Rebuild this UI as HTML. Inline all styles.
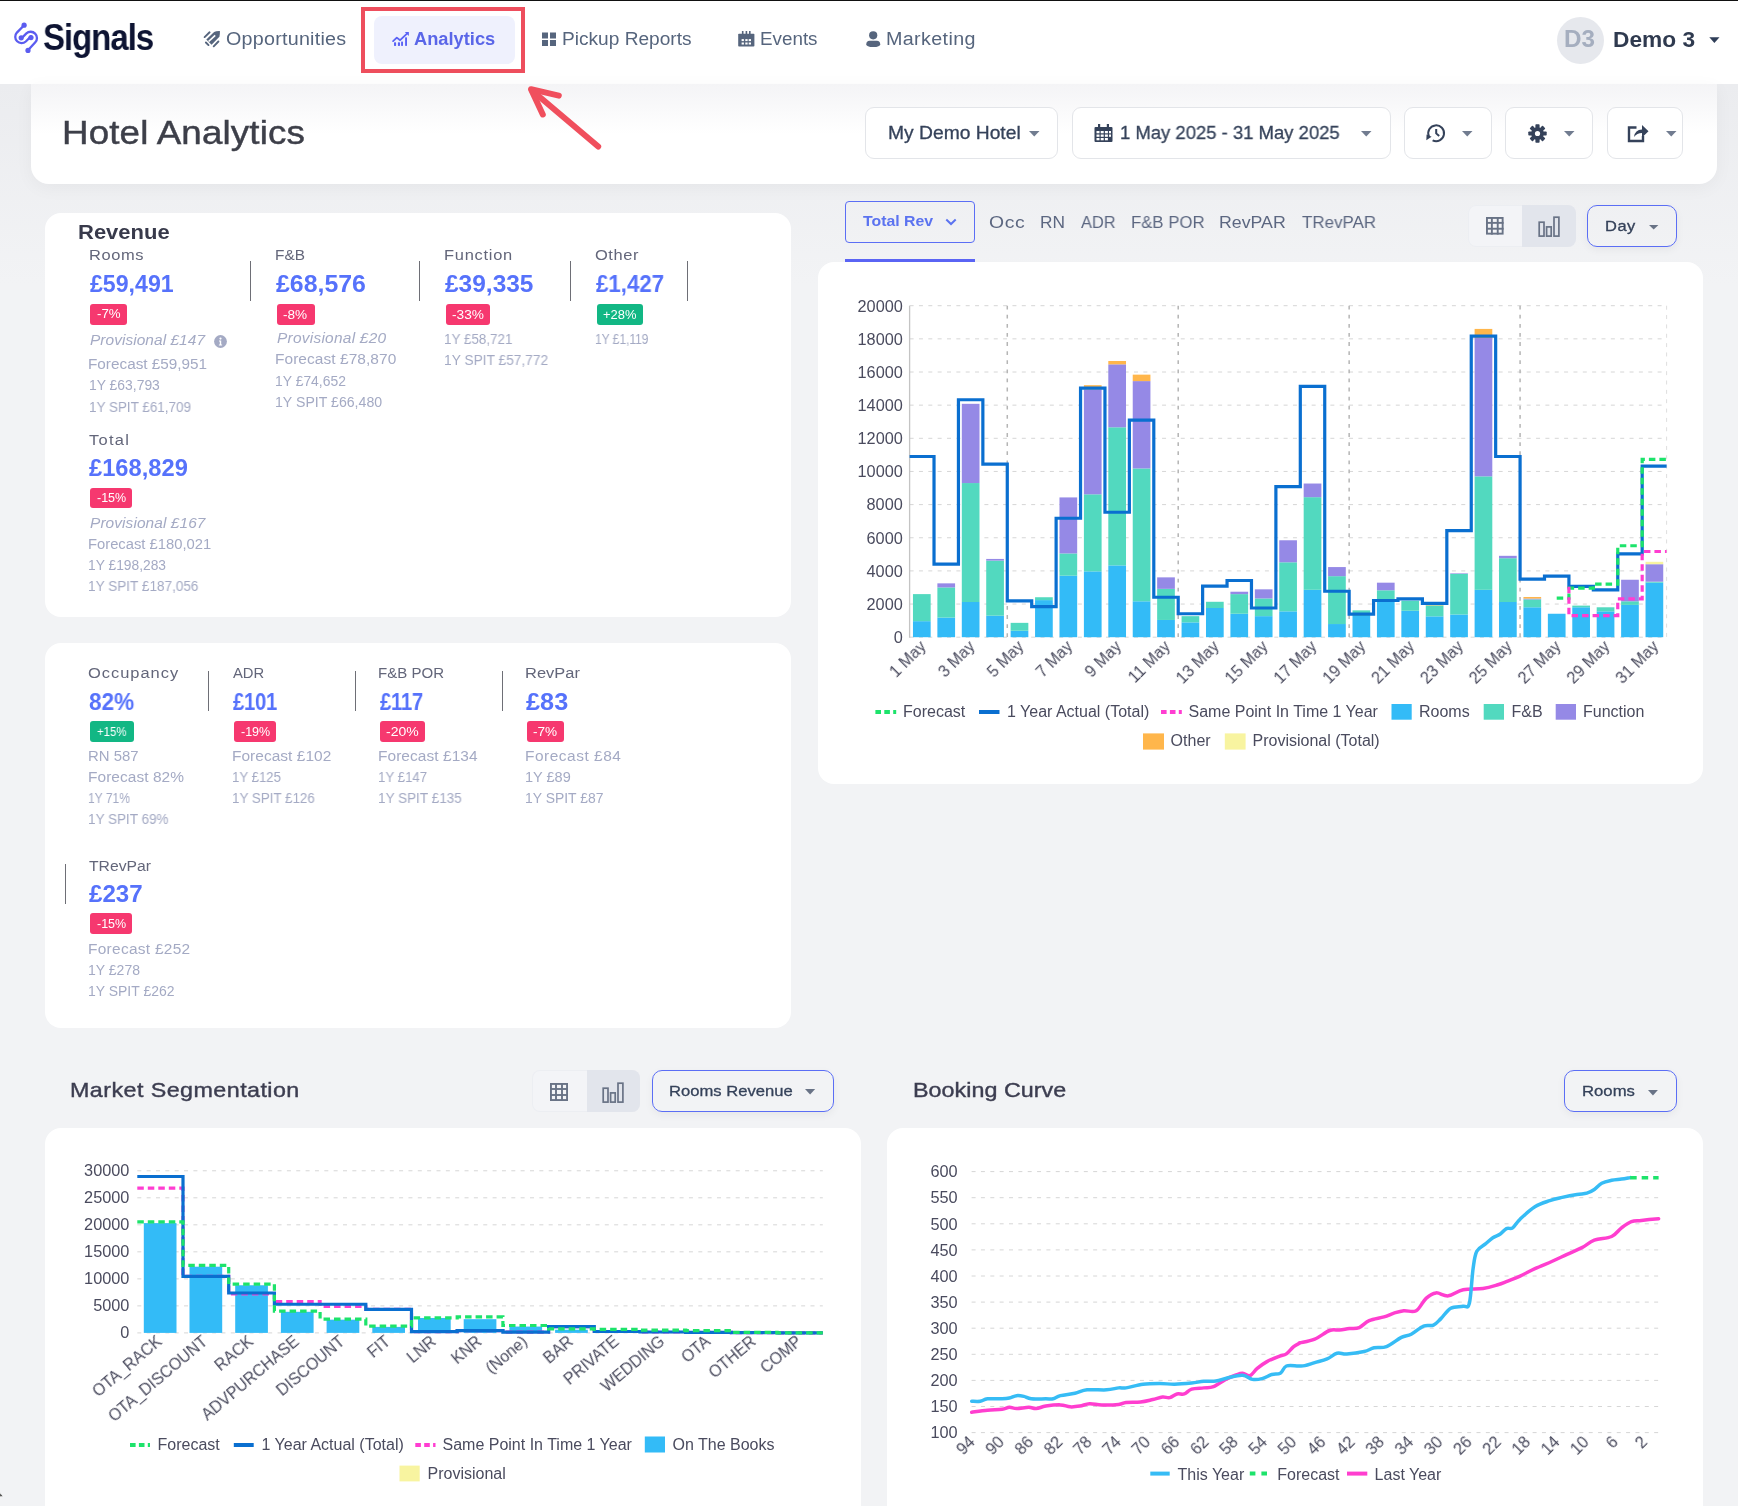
<!DOCTYPE html><html><head><meta charset="utf-8"><style>
html,body{margin:0;padding:0}
body{width:1738px;height:1506px;overflow:hidden;position:relative;background:#f2f3f5;font-family:'Liberation Sans', sans-serif}
.t{position:absolute;line-height:1;white-space:nowrap;will-change:transform}
svg text{will-change:transform}
svg{position:absolute;overflow:visible}
</style></head><body>
<div style="position:absolute;left:0px;top:84px;width:1738px;height:200px;background:linear-gradient(#ebecef,#f2f3f5);"></div>
<div style="position:absolute;left:0px;top:0px;width:1738px;height:84px;background:#fff;"></div>
<div style="position:absolute;left:0px;top:0px;width:1738px;height:1px;background:#111;"></div>
<svg style="left:0;top:0" width="60" height="60" viewBox="0 0 60 60">
<g fill="none" stroke="#5b5cf0" stroke-width="2.3" stroke-linecap="round">
<path d="M24.1 25.2 L16.9 32.6 A6.3 6.3 0 0 0 25.8 41.5 L31 36.4"/>
<path d="M21.2 38.6 L26.4 33.4 A6.3 6.3 0 0 1 35.3 42.3 L28 50.3"/>
</g>
<g fill="#5b5cf0"><circle cx="24.1" cy="25.2" r="2.6"/><circle cx="21.2" cy="37.8" r="2.6"/><circle cx="31" cy="37.6" r="2.6"/><circle cx="28" cy="50.4" r="2.6"/></g>
</svg>
<div class="t" style="left:43.12px;top:19.45px;font-size:37.5px;color:#0e1433;transform:scaleX(0.8800);transform-origin:0 0;font-weight:700;letter-spacing:-1.189px;">Signals</div>
<svg style="left:195px;top:22px" width="40" height="34" viewBox="0 0 40 34">
<path d="M11.3 17.5 L19.1 9.9 Q21 9 24.9 9.1 Q25 12.5 24.4 14.7 L16.6 22.8 Z" fill="#56657d"/>
<path d="M13.6 19.5 L20.2 13.4" stroke="#fff" stroke-width="1.7"/>
<g stroke="#56657d" stroke-width="1.9" stroke-linecap="round" fill="none">
<path d="M9.6 15.1 L14.6 10.3"/><path d="M10.9 20.5 L13.5 23.1"/><path d="M18.7 24.3 L23.4 19.5"/></g>
</svg>
<div class="t" style="left:225.88px;top:30.70px;font-size:17.6px;color:#56657d;transform:scaleX(1.1200);transform-origin:0 0;letter-spacing:0.219px;">Opportunities</div>
<div style="position:absolute;left:374px;top:16px;width:141px;height:48px;background:#eff1fd;border-radius:8px;"></div>
<div style="position:absolute;left:361px;top:7px;width:164px;height:66px;box-sizing:border-box;border:4.5px solid #ee4e5d;"></div>
<svg style="left:385px;top:25px" width="30" height="27" viewBox="0 0 30 27">
<g fill="#5a63f5"><rect x="9" y="17.3" width="2.1" height="3.6" rx="0.6"/><rect x="12.9" y="17.3" width="2.1" height="3.6" rx="0.6"/><rect x="16.1" y="16.5" width="1.9" height="4.4" rx="0.6"/><rect x="20.1" y="12.3" width="1.9" height="8.6" rx="0.6"/>
<path d="M19.8 6.9 L23.9 6.9 L23.9 11 Z"/></g>
<path d="M8.1 16.1 L11.8 12.6 L15.1 15.2 L22 8.6" stroke="#5a63f5" stroke-width="1.8" fill="none" stroke-linecap="round" stroke-linejoin="round"/>
</svg>
<div class="t" style="left:414.26px;top:30.90px;font-size:17.6px;color:#5a66e8;transform:scaleX(1.0390);transform-origin:0 0;font-weight:700;">Analytics</div>
<svg style="left:542px;top:32px" width="15" height="15" viewBox="0 0 15 15"><g fill="#56657d">
<rect x="0" y="0.5" width="6" height="6"/><rect x="8" y="0.5" width="6" height="6"/><rect x="0" y="8" width="6" height="6"/><rect x="8" y="8" width="6" height="6"/></g></svg>
<div class="t" style="left:561.71px;top:30.70px;font-size:17.6px;color:#56657d;transform:scaleX(1.0856);transform-origin:0 0;">Pickup Reports</div>
<svg style="left:738px;top:31px" width="17" height="16" viewBox="0 0 17 16">
<rect x="0.2" y="2.8" width="16.2" height="12.8" rx="0.8" fill="#56657d"/>
<g fill="#56657d"><rect x="3.9" y="0" width="1.6" height="3.4"/><rect x="7.6" y="0" width="1.6" height="3.4"/><rect x="11" y="0" width="1.6" height="3.4"/></g>
<g fill="#fff"><rect x="3.6" y="8.1" width="2.3" height="2"/><rect x="7.3" y="8.1" width="2.3" height="2"/><rect x="10.7" y="8.1" width="2.3" height="2"/>
<rect x="3.6" y="11.5" width="2.3" height="2"/><rect x="7.3" y="11.5" width="2.3" height="2"/><rect x="10.7" y="11.5" width="2.3" height="2"/></g>
</svg>
<div class="t" style="left:760.23px;top:30.70px;font-size:17.6px;color:#56657d;transform:scaleX(1.0692);transform-origin:0 0;">Events</div>
<svg style="left:865.5px;top:30.5px" width="15" height="17" viewBox="0 0 15 17"><g fill="#56657d">
<circle cx="7.2" cy="4.3" r="4.1"/><path d="M0.3 13.3 Q0.3 9.9 3.6 9.7 L10.9 9.7 Q14.2 9.9 14.2 13.3 Q14.2 16.1 7.25 16.1 Q0.3 16.1 0.3 13.3 Z"/></g></svg>
<div class="t" style="left:886.48px;top:30.70px;font-size:17.6px;color:#56657d;transform:scaleX(1.1200);transform-origin:0 0;letter-spacing:0.335px;">Marketing</div>
<div style="position:absolute;left:1557px;top:16.5px;width:47px;height:47px;border-radius:50%;background:#e6e8ed"></div>
<div class="t" style="left:1564.45px;top:28.33px;font-size:23px;color:#a5aebf;transform:scaleX(1.0536);transform-origin:0 0;font-weight:700;">D3</div>
<div class="t" style="left:1612.97px;top:28.97px;font-size:22px;color:#2f3a4f;transform:scaleX(1.0321);transform-origin:0 0;font-weight:700;">Demo 3</div>
<svg style="left:1708.5px;top:37px" width="11" height="7" viewBox="0 0 11 7"><path d="M0.3 0.3 L10.5 0.3 L5.4 6 Z" fill="#2f3e58"/></svg>
<div style="position:absolute;left:31px;top:84px;width:1686px;height:100px;background:#fff;border-radius:0 0 18px 18px;box-shadow:0 4px 18px rgba(0,0,0,0.045)"></div>
<div style="position:absolute;left:31px;top:84px;width:1686px;height:50px;background:linear-gradient(#f4f4f6,rgba(255,255,255,0))"></div>
<div class="t" style="left:62.24px;top:116.63px;font-size:32.8px;color:#3d3f49;transform:scaleX(1.1200);transform-origin:0 0;letter-spacing:0.120px;-webkit-text-stroke:0.45px #3d3f49;">Hotel Analytics</div>
<div style="position:absolute;left:865px;top:107px;width:193px;height:52px;box-sizing:border-box;border:1px solid #e3e5e9;border-radius:9px;background:#fff"></div>
<div class="t" style="left:887.96px;top:124.05px;font-size:18.6px;color:#35425a;transform:scaleX(1.0357);transform-origin:0 0;-webkit-text-stroke:0.3px #35425a;">My Demo Hotel</div>
<svg style="left:1029px;top:130.8px" width="10.5" height="5.5" viewBox="0 0 10.5 5.5"><path d="M0 0 L10.5 0 L5.25 5.5 Z" fill="#717c90"/></svg>
<div style="position:absolute;left:1072px;top:107px;width:319px;height:52px;box-sizing:border-box;border:1px solid #e3e5e9;border-radius:9px;background:#fff"></div>
<svg style="left:1094px;top:124px" width="19" height="18" viewBox="0 0 19 18"><g fill="#35425a"><rect x="0.5" y="3" width="18" height="15" rx="1"/></g>
<g fill="#fff"><rect x="2.5" y="7" width="3" height="2.3"/><rect x="6.7" y="7" width="3" height="2.3"/><rect x="10.9" y="7" width="3" height="2.3"/><rect x="15" y="7" width="2" height="2.3"/>
<rect x="2.5" y="10.5" width="3" height="2.3"/><rect x="6.7" y="10.5" width="3" height="2.3"/><rect x="10.9" y="10.5" width="3" height="2.3"/><rect x="15" y="10.5" width="2" height="2.3"/>
<rect x="2.5" y="14" width="3" height="2.3"/><rect x="6.7" y="14" width="3" height="2.3"/><rect x="10.9" y="14" width="3" height="2.3"/></g>
<g fill="#35425a"><rect x="4" y="0" width="2.2" height="4.5"/><rect x="12.8" y="0" width="2.2" height="4.5"/></g></svg>
<div class="t" style="left:1119.51px;top:124.05px;font-size:18.6px;color:#35425a;transform:scaleX(0.9932);transform-origin:0 0;-webkit-text-stroke:0.3px #35425a;">1 May 2025 - 31 May 2025</div>
<svg style="left:1361px;top:130.8px" width="10.5" height="5.5" viewBox="0 0 10.5 5.5"><path d="M0 0 L10.5 0 L5.25 5.5 Z" fill="#717c90"/></svg>
<div style="position:absolute;left:1404px;top:107px;width:88px;height:52px;box-sizing:border-box;border:1px solid #e3e5e9;border-radius:9px;background:#fff"></div>
<svg style="left:1425px;top:123px" width="22" height="20" viewBox="0 0 22 20"><g fill="none" stroke="#35425a" stroke-width="2">
<path d="M3.9 13.4 A7.9 7.9 0 1 1 7.6 17.3"/><path d="M11.2 6 L11.2 10.4 L14.2 13"/></g>
<path d="M1.3 17.2 L1.6 11.4 L6.6 13.8 Z" fill="#35425a"/></svg>
<svg style="left:1462px;top:130.8px" width="10.5" height="5.5" viewBox="0 0 10.5 5.5"><path d="M0 0 L10.5 0 L5.25 5.5 Z" fill="#717c90"/></svg>
<div style="position:absolute;left:1505px;top:107px;width:88px;height:52px;box-sizing:border-box;border:1px solid #e3e5e9;border-radius:9px;background:#fff"></div>
<svg style="left:1528px;top:124px" width="19" height="19" viewBox="0 0 19 19"><g transform="translate(9.5 9.5)" fill="#35425a">
<circle r="6.3"/><rect x="-2.1" y="-9.2" width="4.2" height="4.5" rx="0.8" transform="rotate(0)"/><rect x="-2.1" y="-9.2" width="4.2" height="4.5" rx="0.8" transform="rotate(45)"/><rect x="-2.1" y="-9.2" width="4.2" height="4.5" rx="0.8" transform="rotate(90)"/><rect x="-2.1" y="-9.2" width="4.2" height="4.5" rx="0.8" transform="rotate(135)"/><rect x="-2.1" y="-9.2" width="4.2" height="4.5" rx="0.8" transform="rotate(180)"/><rect x="-2.1" y="-9.2" width="4.2" height="4.5" rx="0.8" transform="rotate(225)"/><rect x="-2.1" y="-9.2" width="4.2" height="4.5" rx="0.8" transform="rotate(270)"/><rect x="-2.1" y="-9.2" width="4.2" height="4.5" rx="0.8" transform="rotate(315)"/></g>
<circle cx="9.5" cy="9.5" r="2.6" fill="#fff"/></svg>
<svg style="left:1564px;top:130.8px" width="10.5" height="5.5" viewBox="0 0 10.5 5.5"><path d="M0 0 L10.5 0 L5.25 5.5 Z" fill="#717c90"/></svg>
<div style="position:absolute;left:1607px;top:107px;width:76px;height:52px;box-sizing:border-box;border:1px solid #e3e5e9;border-radius:9px;background:#fff"></div>
<svg style="left:1627px;top:123px" width="23" height="20" viewBox="0 0 23 20">
<path d="M9.5 4.5 L2 4.5 L2 18 L16 18 L16 13" fill="none" stroke="#35425a" stroke-width="2.4"/>
<path d="M7 14 Q8 6.5 15 6.5 L15 2 L21.5 8.3 L15 14.5 L15 10 Q10 10 7 14 Z" fill="#35425a"/></svg>
<svg style="left:1665.5px;top:130.8px" width="10.5" height="5.5" viewBox="0 0 10.5 5.5"><path d="M0 0 L10.5 0 L5.25 5.5 Z" fill="#717c90"/></svg>
<svg style="left:500px;top:70px" width="120" height="100" viewBox="500 70 120 100">
<g stroke="#f04f5d" stroke-width="6" stroke-linecap="round" stroke-linejoin="round" fill="none">
<path d="M598.2 146.5 L532 90.5"/><path d="M558.8 95.6 L531 89.2 L542.8 114.5"/></g>
</svg>
<div style="position:absolute;left:45px;top:213px;width:746px;height:404px;background:#fff;border-radius:16px;"></div>
<div class="t" style="left:77.93px;top:221.74px;font-size:20.5px;color:#383a4b;transform:scaleX(1.0726);transform-origin:0 0;font-weight:700;">Revenue</div>
<div class="t" style="left:88.58px;top:248.35px;font-size:14.7px;color:#63667a;transform:scaleX(1.1200);transform-origin:0 0;letter-spacing:0.513px;">Rooms</div>
<div class="t" style="left:89.70px;top:273.43px;font-size:23px;color:#5672fb;transform:scaleX(1.0060);transform-origin:0 0;font-weight:700;">£59,491</div>
<div style="position:absolute;left:90px;top:304px;width:37.0px;height:20.8px;background:#f6386f;border-radius:3px"></div>
<div class="t" style="left:96.74px;top:308.42px;font-size:12.5px;color:#fff;transform:scaleX(1.0619);transform-origin:0 0;">-7%</div>
<div class="t" style="left:90.00px;top:334.02px;font-size:13.8px;color:#a4aac4;transform:scaleX(1.1200);transform-origin:0 0;letter-spacing:0.045px;font-style:italic;">Provisional £147</div>
<svg style="left:214px;top:334.5px" width="13" height="13" viewBox="0 0 13 13"><circle cx="6.5" cy="6.5" r="6.4" fill="#a4aac4"/><circle cx="6.5" cy="3.6" r="1.1" fill="#fff"/><path d="M5 5.6 L7.2 5.6 L7.2 9.6 L8.1 9.6 L8.1 10.6 L4.9 10.6 L4.9 9.6 L5.8 9.6 L5.8 6.6 L5 6.6 Z" fill="#fff"/></svg>
<div class="t" style="left:88.39px;top:358.22px;font-size:13.8px;color:#a4aac4;transform:scaleX(1.1094);transform-origin:0 0;">Forecast £59,951</div>
<div class="t" style="left:88.69px;top:379.32px;font-size:13.8px;color:#a4aac4;transform:scaleX(1.0072);transform-origin:0 0;">1Y £63,793</div>
<div class="t" style="left:88.73px;top:401.32px;font-size:13.8px;color:#a4aac4;transform:scaleX(0.9748);transform-origin:0 0;">1Y SPIT £61,709</div>
<div style="position:absolute;left:249.9px;top:261.3px;width:1.3px;height:39.39999999999998px;background:#6e6f76"></div>
<div class="t" style="left:274.85px;top:248.45px;font-size:14.7px;color:#63667a;transform:scaleX(1.0481);transform-origin:0 0;">F&amp;B</div>
<div class="t" style="left:276.20px;top:273.13px;font-size:23px;color:#5672fb;transform:scaleX(1.0817);transform-origin:0 0;font-weight:700;">£68,576</div>
<div style="position:absolute;left:277px;top:304.2px;width:38.0px;height:20.8px;background:#f6386f;border-radius:3px"></div>
<div class="t" style="left:283.41px;top:308.62px;font-size:12.5px;color:#fff;transform:scaleX(1.0857);transform-origin:0 0;">-8%</div>
<div class="t" style="left:276.50px;top:332.32px;font-size:13.8px;color:#a4aac4;transform:scaleX(1.1200);transform-origin:0 0;letter-spacing:0.223px;font-style:italic;">Provisional £20</div>
<div class="t" style="left:274.78px;top:353.22px;font-size:13.8px;color:#a4aac4;transform:scaleX(1.1200);transform-origin:0 0;letter-spacing:0.058px;">Forecast £78,870</div>
<div class="t" style="left:275.49px;top:375.12px;font-size:13.8px;color:#a4aac4;transform:scaleX(1.0087);transform-origin:0 0;">1Y £74,652</div>
<div class="t" style="left:275.48px;top:396.22px;font-size:13.8px;color:#a4aac4;transform:scaleX(1.0243);transform-origin:0 0;">1Y SPIT £66,480</div>
<div style="position:absolute;left:418.9px;top:261.3px;width:1.3px;height:39.39999999999998px;background:#6e6f76"></div>
<div class="t" style="left:443.58px;top:248.45px;font-size:14.7px;color:#63667a;transform:scaleX(1.1200);transform-origin:0 0;letter-spacing:0.651px;">Function</div>
<div class="t" style="left:444.70px;top:273.13px;font-size:23px;color:#5672fb;transform:scaleX(1.0639);transform-origin:0 0;font-weight:700;">£39,335</div>
<div style="position:absolute;left:446px;top:304.2px;width:44.0px;height:20.8px;background:#f6386f;border-radius:3px"></div>
<div class="t" style="left:451.71px;top:308.62px;font-size:12.5px;color:#fff;transform:scaleX(1.0929);transform-origin:0 0;">-33%</div>
<div class="t" style="left:443.73px;top:332.92px;font-size:13.8px;color:#a4aac4;transform:scaleX(0.9725);transform-origin:0 0;">1Y £58,721</div>
<div class="t" style="left:443.70px;top:353.72px;font-size:13.8px;color:#a4aac4;transform:scaleX(0.9951);transform-origin:0 0;">1Y SPIT £57,772</div>
<div style="position:absolute;left:569.8px;top:261.3px;width:1.3px;height:39.39999999999998px;background:#6e6f76"></div>
<div class="t" style="left:594.88px;top:248.45px;font-size:14.7px;color:#63667a;transform:scaleX(1.1200);transform-origin:0 0;letter-spacing:0.509px;">Other</div>
<div class="t" style="left:596.00px;top:273.13px;font-size:23px;color:#5672fb;transform:scaleX(0.9686);transform-origin:0 0;font-weight:700;">£1,427</div>
<div style="position:absolute;left:597px;top:304.2px;width:46.0px;height:20.8px;background:#12b784;border-radius:3px"></div>
<div class="t" style="left:603.26px;top:308.62px;font-size:12.5px;color:#fff;transform:scaleX(1.0355);transform-origin:0 0;">+28%</div>
<div class="t" style="left:595.12px;top:332.92px;font-size:13.8px;color:#a4aac4;transform:scaleX(0.8800);transform-origin:0 0;letter-spacing:-0.114px;">1Y £1,119</div>
<div style="position:absolute;left:686.8px;top:261.3px;width:1.3px;height:39.39999999999998px;background:#6e6f76"></div>
<div class="t" style="left:89.20px;top:433.35px;font-size:14.7px;color:#63667a;transform:scaleX(1.1200);transform-origin:0 0;letter-spacing:1.138px;">Total</div>
<div class="t" style="left:89.20px;top:457.03px;font-size:23px;color:#5672fb;transform:scaleX(1.0305);transform-origin:0 0;font-weight:700;">£168,829</div>
<div style="position:absolute;left:90px;top:487.5px;width:42.0px;height:20.8px;background:#f6386f;border-radius:3px"></div>
<div class="t" style="left:96.71px;top:491.92px;font-size:12.5px;color:#fff;transform:scaleX(0.9929);transform-origin:0 0;">-15%</div>
<div class="t" style="left:89.80px;top:517.22px;font-size:13.8px;color:#a4aac4;transform:scaleX(1.1200);transform-origin:0 0;letter-spacing:0.069px;font-style:italic;">Provisional £167</div>
<div class="t" style="left:88.13px;top:538.02px;font-size:13.8px;color:#a4aac4;transform:scaleX(1.0702);transform-origin:0 0;">Forecast £180,021</div>
<div class="t" style="left:88.21px;top:559.02px;font-size:13.8px;color:#a4aac4;transform:scaleX(0.9947);transform-origin:0 0;">1Y £198,283</div>
<div class="t" style="left:88.22px;top:580.02px;font-size:13.8px;color:#a4aac4;transform:scaleX(0.9838);transform-origin:0 0;">1Y SPIT £187,056</div>
<div style="position:absolute;left:45px;top:642.6px;width:746px;height:385px;background:#fff;border-radius:16px;"></div>
<div class="t" style="left:88.18px;top:666.25px;font-size:14.7px;color:#63667a;transform:scaleX(1.1200);transform-origin:0 0;letter-spacing:0.875px;">Occupancy</div>
<div class="t" style="left:88.92px;top:690.93px;font-size:23px;color:#5672fb;transform:scaleX(0.9822);transform-origin:0 0;font-weight:700;">82%</div>
<div style="position:absolute;left:89.9px;top:721.1px;width:44.0px;height:20.8px;background:#12b784;border-radius:3px"></div>
<div class="t" style="left:97.09px;top:725.52px;font-size:12.5px;color:#fff;transform:scaleX(0.9129);transform-origin:0 0;">+15%</div>
<div class="t" style="left:88.22px;top:749.52px;font-size:13.8px;color:#a4aac4;transform:scaleX(1.0800);transform-origin:0 0;">RN 587</div>
<div class="t" style="left:88.18px;top:771.22px;font-size:13.8px;color:#a4aac4;transform:scaleX(1.1200);transform-origin:0 0;letter-spacing:0.050px;">Forecast 82%</div>
<div class="t" style="left:88.42px;top:792.22px;font-size:13.8px;color:#a4aac4;transform:scaleX(0.8800);transform-origin:0 0;letter-spacing:-0.082px;">1Y 71%</div>
<div class="t" style="left:88.32px;top:813.02px;font-size:13.8px;color:#a4aac4;transform:scaleX(0.9778);transform-origin:0 0;">1Y SPIT 69%</div>
<div style="position:absolute;left:208.2px;top:671.3px;width:1.3px;height:39.700000000000045px;background:#6e6f76"></div>
<div class="t" style="left:233.00px;top:666.25px;font-size:14.7px;color:#63667a;transform:scaleX(1.0067);transform-origin:0 0;">ADR</div>
<div class="t" style="left:233.00px;top:690.93px;font-size:23px;color:#5672fb;transform:scaleX(0.8800);transform-origin:0 0;font-weight:700;letter-spacing:-0.333px;">£101</div>
<div style="position:absolute;left:234.2px;top:721.1px;width:41.8px;height:20.8px;background:#f6386f;border-radius:3px"></div>
<div class="t" style="left:240.51px;top:725.52px;font-size:12.5px;color:#fff;transform:scaleX(0.9929);transform-origin:0 0;">-19%</div>
<div class="t" style="left:231.88px;top:749.52px;font-size:13.8px;color:#a4aac4;transform:scaleX(1.1200);transform-origin:0 0;letter-spacing:0.034px;">Forecast £102</div>
<div class="t" style="left:232.04px;top:771.22px;font-size:13.8px;color:#a4aac4;transform:scaleX(0.9560);transform-origin:0 0;">1Y £125</div>
<div class="t" style="left:232.03px;top:792.22px;font-size:13.8px;color:#a4aac4;transform:scaleX(0.9690);transform-origin:0 0;">1Y SPIT £126</div>
<div style="position:absolute;left:354.9px;top:671.3px;width:1.3px;height:39.700000000000045px;background:#6e6f76"></div>
<div class="t" style="left:377.98px;top:666.25px;font-size:14.7px;color:#63667a;transform:scaleX(1.0238);transform-origin:0 0;">F&amp;B POR</div>
<div class="t" style="left:379.70px;top:690.93px;font-size:23px;color:#5672fb;transform:scaleX(0.8800);transform-origin:0 0;font-weight:700;letter-spacing:-0.311px;">£117</div>
<div style="position:absolute;left:380.3px;top:721.1px;width:44.7px;height:20.8px;background:#f6386f;border-radius:3px"></div>
<div class="t" style="left:386.18px;top:725.52px;font-size:12.5px;color:#fff;transform:scaleX(1.1200);transform-origin:0 0;letter-spacing:0.012px;">-20%</div>
<div class="t" style="left:377.88px;top:749.52px;font-size:13.8px;color:#a4aac4;transform:scaleX(1.1200);transform-origin:0 0;letter-spacing:0.057px;">Forecast £134</div>
<div class="t" style="left:378.04px;top:771.22px;font-size:13.8px;color:#a4aac4;transform:scaleX(0.9600);transform-origin:0 0;">1Y £147</div>
<div class="t" style="left:378.02px;top:792.22px;font-size:13.8px;color:#a4aac4;transform:scaleX(0.9798);transform-origin:0 0;">1Y SPIT £135</div>
<div style="position:absolute;left:501.9px;top:671.3px;width:1.3px;height:39.700000000000045px;background:#6e6f76"></div>
<div class="t" style="left:524.68px;top:666.25px;font-size:14.7px;color:#63667a;transform:scaleX(1.1200);transform-origin:0 0;letter-spacing:0.025px;">RevPar</div>
<div class="t" style="left:525.80px;top:690.93px;font-size:23px;color:#5672fb;transform:scaleX(1.1000);transform-origin:0 0;font-weight:700;">£83</div>
<div style="position:absolute;left:527px;top:721.1px;width:36.8px;height:20.8px;background:#f6386f;border-radius:3px"></div>
<div class="t" style="left:533.11px;top:725.52px;font-size:12.5px;color:#fff;transform:scaleX(1.0857);transform-origin:0 0;">-7%</div>
<div class="t" style="left:524.68px;top:749.52px;font-size:13.8px;color:#a4aac4;transform:scaleX(1.1200);transform-origin:0 0;letter-spacing:0.464px;">Forecast £84</div>
<div class="t" style="left:524.75px;top:771.22px;font-size:13.8px;color:#a4aac4;transform:scaleX(1.0524);transform-origin:0 0;">1Y £89</div>
<div class="t" style="left:524.79px;top:792.22px;font-size:13.8px;color:#a4aac4;transform:scaleX(1.0092);transform-origin:0 0;">1Y SPIT £87</div>
<div style="position:absolute;left:64.9px;top:863.8px;width:1.3px;height:39.90000000000009px;background:#6e6f76"></div>
<div class="t" style="left:89.20px;top:859.15px;font-size:14.7px;color:#63667a;transform:scaleX(1.0707);transform-origin:0 0;">TRevPar</div>
<div class="t" style="left:89.20px;top:882.53px;font-size:23px;color:#5672fb;transform:scaleX(1.0480);transform-origin:0 0;font-weight:700;">£237</div>
<div style="position:absolute;left:90px;top:913.3px;width:42.0px;height:20.8px;background:#f6386f;border-radius:3px"></div>
<div class="t" style="left:96.71px;top:917.72px;font-size:12.5px;color:#fff;transform:scaleX(0.9929);transform-origin:0 0;">-15%</div>
<div class="t" style="left:88.08px;top:942.82px;font-size:13.8px;color:#a4aac4;transform:scaleX(1.1200);transform-origin:0 0;letter-spacing:0.250px;">Forecast £252</div>
<div class="t" style="left:88.18px;top:963.82px;font-size:13.8px;color:#a4aac4;transform:scaleX(1.0160);transform-origin:0 0;">1Y £278</div>
<div class="t" style="left:88.19px;top:985.02px;font-size:13.8px;color:#a4aac4;transform:scaleX(1.0131);transform-origin:0 0;">1Y SPIT £262</div>
<div style="position:absolute;left:845px;top:201px;width:129.5px;height:41.6px;box-sizing:border-box;border:1.3px solid #5b6ef5;border-radius:4px"></div>
<div class="t" style="left:863.30px;top:213.30px;font-size:15px;color:#5b73f0;transform:scaleX(1.0561);transform-origin:0 0;font-weight:700;">Total Rev</div>
<svg style="left:945px;top:218px" width="12" height="8" viewBox="0 0 12 8"><path d="M1.3 1.5 L6 6 L10.7 1.5" fill="none" stroke="#5b73f0" stroke-width="2"/></svg>
<div style="position:absolute;left:845px;top:258.8px;width:130px;height:4px;background:#5a64f4;"></div>
<div class="t" style="left:989.38px;top:213.85px;font-size:17.3px;color:#5c6781;transform:scaleX(1.1200);transform-origin:0 0;letter-spacing:0.545px;">Occ</div>
<div class="t" style="left:1040.01px;top:213.65px;font-size:17.3px;color:#5c6781;transform:scaleX(0.9913);transform-origin:0 0;">RN</div>
<div class="t" style="left:1080.60px;top:213.65px;font-size:17.3px;color:#5c6781;transform:scaleX(0.9500);transform-origin:0 0;">ADR</div>
<div class="t" style="left:1130.73px;top:213.65px;font-size:17.3px;color:#5c6781;transform:scaleX(0.9689);transform-origin:0 0;">F&amp;B POR</div>
<div class="t" style="left:1218.77px;top:213.65px;font-size:17.3px;color:#5c6781;transform:scaleX(1.0270);transform-origin:0 0;">RevPAR</div>
<div class="t" style="left:1301.60px;top:213.65px;font-size:17.3px;color:#5c6781;transform:scaleX(0.9813);transform-origin:0 0;">TRevPAR</div>
<div style="position:absolute;left:1467.7px;top:204.8px;width:108px;height:42px;border-radius:8px;background:#f3f4f7;overflow:hidden;box-shadow:0 0 0 1px #eceef2 inset"><div style="position:absolute;left:54.3px;top:0;width:54px;height:42px;background:#e2e5ec"></div></div>
<svg style="left:1486px;top:217.4px" width="17.6" height="17.6" viewBox="0 0 17.6 17.6"><g fill="none" stroke="#697386" stroke-width="1.9"><rect x="0.95" y="0.95" width="15.700000000000001" height="15.700000000000001"/><path d="M5.87 0 V17.6"/><path d="M0 5.87 H17.6"/><path d="M11.73 0 V17.6"/><path d="M0 11.73 H17.6"/></g></svg>
<svg style="left:1537.5px;top:215.5px" width="22.0" height="21.0" viewBox="0 0 22 21"><g fill="none" stroke="#697386" stroke-width="1.7"><rect x="1.2" y="6.2" width="4.8" height="13.9"/><rect x="8.6" y="10.9" width="4.6" height="9.2"/><rect x="16" y="1.2" width="4.9" height="18.9"/></g></svg>
<div style="position:absolute;left:1587px;top:205px;width:89.5px;height:41.7px;box-sizing:border-box;border:1.5px solid #5b6ef5;border-radius:10px;box-shadow:0 3px 8px rgba(0,0,0,0.05)"></div>
<div class="t" style="left:1604.88px;top:218.65px;font-size:14.7px;color:#35425a;transform:scaleX(1.1200);transform-origin:0 0;letter-spacing:0.446px;-webkit-text-stroke:0.3px #35425a;">Day</div>
<svg style="left:1648.6px;top:225.3px" width="9.4" height="4.5" viewBox="0 0 9.4 4.5"><path d="M0 0 L9.4 0 L4.7 4.5 Z" fill="#697386"/></svg>
<div style="position:absolute;left:818px;top:262px;width:885px;height:521.5px;background:#fff;border-radius:16px;"></div>
<svg style="left:818px;top:262px" width="885" height="522" viewBox="818 262 885 522" font-family="Liberation Sans, sans-serif">
<path d="M909.6 637.20 H1666.6" stroke="#d6d6d6" stroke-width="1" stroke-dasharray="4 5.35"/>
<text x="902.8" y="643.00" text-anchor="end" font-size="16.3" fill="#4a4b5e">0</text>
<path d="M909.6 604.05 H1666.6" stroke="#d6d6d6" stroke-width="1" stroke-dasharray="4 5.35"/>
<text x="902.8" y="609.85" text-anchor="end" font-size="16.3" fill="#4a4b5e">2000</text>
<path d="M909.6 570.90 H1666.6" stroke="#d6d6d6" stroke-width="1" stroke-dasharray="4 5.35"/>
<text x="902.8" y="576.70" text-anchor="end" font-size="16.3" fill="#4a4b5e">4000</text>
<path d="M909.6 537.75 H1666.6" stroke="#d6d6d6" stroke-width="1" stroke-dasharray="4 5.35"/>
<text x="902.8" y="543.55" text-anchor="end" font-size="16.3" fill="#4a4b5e">6000</text>
<path d="M909.6 504.60 H1666.6" stroke="#d6d6d6" stroke-width="1" stroke-dasharray="4 5.35"/>
<text x="902.8" y="510.40" text-anchor="end" font-size="16.3" fill="#4a4b5e">8000</text>
<path d="M909.6 471.45 H1666.6" stroke="#d6d6d6" stroke-width="1" stroke-dasharray="4 5.35"/>
<text x="902.8" y="477.25" text-anchor="end" font-size="16.3" fill="#4a4b5e">10000</text>
<path d="M909.6 438.30 H1666.6" stroke="#d6d6d6" stroke-width="1" stroke-dasharray="4 5.35"/>
<text x="902.8" y="444.10" text-anchor="end" font-size="16.3" fill="#4a4b5e">12000</text>
<path d="M909.6 405.15 H1666.6" stroke="#d6d6d6" stroke-width="1" stroke-dasharray="4 5.35"/>
<text x="902.8" y="410.95" text-anchor="end" font-size="16.3" fill="#4a4b5e">14000</text>
<path d="M909.6 372.00 H1666.6" stroke="#d6d6d6" stroke-width="1" stroke-dasharray="4 5.35"/>
<text x="902.8" y="377.80" text-anchor="end" font-size="16.3" fill="#4a4b5e">16000</text>
<path d="M909.6 338.85 H1666.6" stroke="#d6d6d6" stroke-width="1" stroke-dasharray="4 5.35"/>
<text x="902.8" y="344.65" text-anchor="end" font-size="16.3" fill="#4a4b5e">18000</text>
<path d="M909.6 305.70 H1666.6" stroke="#d6d6d6" stroke-width="1" stroke-dasharray="4 5.35"/>
<text x="902.8" y="311.50" text-anchor="end" font-size="16.3" fill="#4a4b5e">20000</text>
<path d="M1007.28 305.70 V637.2" stroke="#b5b5b5" stroke-width="1.5" stroke-dasharray="3.8 5.3"/>
<path d="M1178.21 305.70 V637.2" stroke="#b5b5b5" stroke-width="1.5" stroke-dasharray="3.8 5.3"/>
<path d="M1349.15 305.70 V637.2" stroke="#b5b5b5" stroke-width="1.5" stroke-dasharray="3.8 5.3"/>
<path d="M1520.08 305.70 V637.2" stroke="#b5b5b5" stroke-width="1.5" stroke-dasharray="3.8 5.3"/>
<path d="M1666.6 305.70 V637.2" stroke="#dedede" stroke-width="1" stroke-dasharray="4 5.35"/>
<path d="M909.6 305.70 V637.7" stroke="#c4c4c4" stroke-width="1.3"/>
<rect x="912.96" y="621.17" width="17.7" height="16.03" fill="#33bbf7"/>
<rect x="912.96" y="594.11" width="17.7" height="27.07" fill="#52d9bf"/>
<rect x="937.38" y="617.58" width="17.7" height="19.62" fill="#33bbf7"/>
<rect x="937.38" y="587.41" width="17.7" height="30.17" fill="#52d9bf"/>
<rect x="937.38" y="583.35" width="17.7" height="4.06" fill="#9589e6"/>
<rect x="961.80" y="602.01" width="17.7" height="35.19" fill="#33bbf7"/>
<rect x="961.80" y="483.05" width="17.7" height="118.96" fill="#52d9bf"/>
<rect x="961.80" y="403.82" width="17.7" height="79.23" fill="#9589e6"/>
<rect x="986.22" y="615.65" width="17.7" height="21.55" fill="#33bbf7"/>
<rect x="986.22" y="560.61" width="17.7" height="55.05" fill="#52d9bf"/>
<rect x="986.22" y="558.93" width="17.7" height="1.67" fill="#9589e6"/>
<rect x="1010.64" y="630.74" width="17.7" height="6.46" fill="#33bbf7"/>
<rect x="1010.64" y="622.85" width="17.7" height="7.89" fill="#52d9bf"/>
<rect x="1035.06" y="600.11" width="17.7" height="37.09" fill="#33bbf7"/>
<rect x="1035.06" y="597.24" width="17.7" height="2.87" fill="#52d9bf"/>
<rect x="1059.48" y="575.69" width="17.7" height="61.51" fill="#33bbf7"/>
<rect x="1059.48" y="553.43" width="17.7" height="22.26" fill="#52d9bf"/>
<rect x="1059.48" y="497.42" width="17.7" height="56.01" fill="#9589e6"/>
<rect x="1083.90" y="571.38" width="17.7" height="65.82" fill="#33bbf7"/>
<rect x="1083.90" y="494.31" width="17.7" height="77.07" fill="#52d9bf"/>
<rect x="1083.90" y="389.47" width="17.7" height="104.84" fill="#9589e6"/>
<rect x="1083.90" y="385.16" width="17.7" height="4.31" fill="#ffb64b"/>
<rect x="1108.31" y="565.40" width="17.7" height="71.80" fill="#33bbf7"/>
<rect x="1108.31" y="427.29" width="17.7" height="138.10" fill="#52d9bf"/>
<rect x="1108.31" y="364.34" width="17.7" height="62.95" fill="#9589e6"/>
<rect x="1108.31" y="360.99" width="17.7" height="3.35" fill="#ffb64b"/>
<rect x="1132.73" y="601.30" width="17.7" height="35.90" fill="#33bbf7"/>
<rect x="1132.73" y="468.45" width="17.7" height="132.85" fill="#52d9bf"/>
<rect x="1132.73" y="381.10" width="17.7" height="87.35" fill="#9589e6"/>
<rect x="1132.73" y="374.64" width="17.7" height="6.46" fill="#ffb64b"/>
<rect x="1157.15" y="619.96" width="17.7" height="17.24" fill="#33bbf7"/>
<rect x="1157.15" y="588.85" width="17.7" height="31.11" fill="#52d9bf"/>
<rect x="1157.15" y="577.36" width="17.7" height="11.49" fill="#9589e6"/>
<rect x="1181.57" y="622.37" width="17.7" height="14.83" fill="#33bbf7"/>
<rect x="1181.57" y="616.15" width="17.7" height="6.22" fill="#52d9bf"/>
<rect x="1205.99" y="607.99" width="17.7" height="29.21" fill="#33bbf7"/>
<rect x="1205.99" y="601.78" width="17.7" height="6.22" fill="#52d9bf"/>
<rect x="1230.41" y="613.75" width="17.7" height="23.45" fill="#33bbf7"/>
<rect x="1230.41" y="594.12" width="17.7" height="19.62" fill="#52d9bf"/>
<rect x="1230.41" y="591.72" width="17.7" height="2.40" fill="#9589e6"/>
<rect x="1254.83" y="616.15" width="17.7" height="21.05" fill="#33bbf7"/>
<rect x="1254.83" y="598.43" width="17.7" height="17.72" fill="#52d9bf"/>
<rect x="1254.83" y="589.33" width="17.7" height="9.10" fill="#9589e6"/>
<rect x="1279.25" y="611.34" width="17.7" height="25.86" fill="#33bbf7"/>
<rect x="1279.25" y="562.28" width="17.7" height="49.06" fill="#52d9bf"/>
<rect x="1279.25" y="540.27" width="17.7" height="22.01" fill="#9589e6"/>
<rect x="1303.67" y="589.81" width="17.7" height="47.39" fill="#33bbf7"/>
<rect x="1303.67" y="497.17" width="17.7" height="92.64" fill="#52d9bf"/>
<rect x="1303.67" y="483.53" width="17.7" height="13.64" fill="#9589e6"/>
<rect x="1328.09" y="624.04" width="17.7" height="13.16" fill="#33bbf7"/>
<rect x="1328.09" y="576.17" width="17.7" height="47.87" fill="#52d9bf"/>
<rect x="1328.09" y="567.07" width="17.7" height="9.10" fill="#9589e6"/>
<rect x="1352.51" y="615.95" width="17.7" height="21.25" fill="#33bbf7"/>
<rect x="1352.51" y="610.35" width="17.7" height="5.60" fill="#52d9bf"/>
<rect x="1376.93" y="601.93" width="17.7" height="35.27" fill="#33bbf7"/>
<rect x="1376.93" y="590.29" width="17.7" height="11.64" fill="#52d9bf"/>
<rect x="1376.93" y="582.68" width="17.7" height="7.61" fill="#9589e6"/>
<rect x="1401.35" y="610.75" width="17.7" height="26.45" fill="#33bbf7"/>
<rect x="1401.35" y="600.74" width="17.7" height="10.01" fill="#52d9bf"/>
<rect x="1425.77" y="616.35" width="17.7" height="20.85" fill="#33bbf7"/>
<rect x="1425.77" y="605.38" width="17.7" height="10.97" fill="#52d9bf"/>
<rect x="1425.77" y="604.38" width="17.7" height="0.99" fill="#ffb64b"/>
<rect x="1450.19" y="614.51" width="17.7" height="22.69" fill="#33bbf7"/>
<rect x="1450.19" y="573.87" width="17.7" height="40.64" fill="#52d9bf"/>
<rect x="1450.19" y="573.30" width="17.7" height="0.56" fill="#9589e6"/>
<rect x="1474.60" y="589.81" width="17.7" height="47.39" fill="#33bbf7"/>
<rect x="1474.60" y="476.36" width="17.7" height="113.46" fill="#52d9bf"/>
<rect x="1474.60" y="338.02" width="17.7" height="138.33" fill="#9589e6"/>
<rect x="1474.60" y="328.91" width="17.7" height="9.12" fill="#ffb64b"/>
<rect x="1499.02" y="602.01" width="17.7" height="35.19" fill="#33bbf7"/>
<rect x="1499.02" y="558.22" width="17.7" height="43.79" fill="#52d9bf"/>
<rect x="1499.02" y="555.82" width="17.7" height="2.40" fill="#9589e6"/>
<rect x="1523.44" y="607.28" width="17.7" height="29.92" fill="#33bbf7"/>
<rect x="1523.44" y="599.38" width="17.7" height="7.91" fill="#52d9bf"/>
<rect x="1523.44" y="598.58" width="17.7" height="0.80" fill="#9589e6"/>
<rect x="1523.44" y="596.99" width="17.7" height="1.59" fill="#ffb64b"/>
<rect x="1547.86" y="613.75" width="17.7" height="23.45" fill="#33bbf7"/>
<rect x="1572.28" y="607.28" width="17.7" height="29.92" fill="#33bbf7"/>
<rect x="1572.28" y="605.61" width="17.7" height="1.67" fill="#52d9bf"/>
<rect x="1596.70" y="611.34" width="17.7" height="25.86" fill="#33bbf7"/>
<rect x="1596.70" y="607.28" width="17.7" height="4.06" fill="#52d9bf"/>
<rect x="1621.12" y="604.90" width="17.7" height="32.30" fill="#33bbf7"/>
<rect x="1621.12" y="601.30" width="17.7" height="3.60" fill="#52d9bf"/>
<rect x="1621.12" y="579.75" width="17.7" height="21.55" fill="#9589e6"/>
<rect x="1645.54" y="582.64" width="17.7" height="54.56" fill="#33bbf7"/>
<rect x="1645.54" y="581.67" width="17.7" height="0.96" fill="#52d9bf"/>
<rect x="1645.54" y="564.20" width="17.7" height="17.47" fill="#9589e6"/>
<rect x="1645.54" y="561.80" width="17.7" height="2.40" fill="#f8f4a0"/>
<path d="M909.60 456.48 H934.02 V564.20 H958.44 V399.76 H982.86 V464.16 H1007.28 V600.82 H1031.70 V606.57 H1056.12 V518.24 H1080.54 V388.08 H1104.95 V512.26 H1129.37 V420.12 H1153.79 V597.24 H1178.21 V613.75 H1202.63 V586.22 H1227.05 V580.48 H1251.47 V607.99 H1275.89 V486.70 H1300.31 V386.37 H1324.73 V591.24 H1349.15 V614.16 H1373.57 V600.49 H1397.99 V598.83 H1422.41 V603.39 H1446.83 V530.69 H1471.25 V336.10 H1495.66 V456.48 H1520.08 V579.04 H1544.50 V576.17 H1568.92 V586.46 H1593.34 V589.81 H1617.76 V553.91 H1642.18 V466.06 H1666.60" fill="none" stroke="#0a6fd0" stroke-width="3.2" stroke-linejoin="miter"/>
<path d="M1556.71 598.18 H1568.92 V588.14 H1593.34 V584.06 H1617.76 V545.77 H1642.18 V459.35 H1666.60" fill="none" stroke="#1de36b" stroke-width="3.2" stroke-dasharray="6.5 4"/>
<path d="M1568.92 586.81 V615.65 H1617.76 V598.91 H1642.18 V551.51 H1666.6" fill="none" stroke="#ff3dd1" stroke-width="3.2" stroke-dasharray="6.5 4"/>
<text transform="translate(927.01 647.50) rotate(-45)" text-anchor="end" font-size="16" fill="#4a4b5e">1 May</text>
<text transform="translate(975.85 647.50) rotate(-45)" text-anchor="end" font-size="16" fill="#4a4b5e">3 May</text>
<text transform="translate(1024.69 647.50) rotate(-45)" text-anchor="end" font-size="16" fill="#4a4b5e">5 May</text>
<text transform="translate(1073.53 647.50) rotate(-45)" text-anchor="end" font-size="16" fill="#4a4b5e">7 May</text>
<text transform="translate(1122.36 647.50) rotate(-45)" text-anchor="end" font-size="16" fill="#4a4b5e">9 May</text>
<text transform="translate(1171.20 647.50) rotate(-45)" text-anchor="end" font-size="16" fill="#4a4b5e">11 May</text>
<text transform="translate(1220.04 647.50) rotate(-45)" text-anchor="end" font-size="16" fill="#4a4b5e">13 May</text>
<text transform="translate(1268.88 647.50) rotate(-45)" text-anchor="end" font-size="16" fill="#4a4b5e">15 May</text>
<text transform="translate(1317.72 647.50) rotate(-45)" text-anchor="end" font-size="16" fill="#4a4b5e">17 May</text>
<text transform="translate(1366.56 647.50) rotate(-45)" text-anchor="end" font-size="16" fill="#4a4b5e">19 May</text>
<text transform="translate(1415.40 647.50) rotate(-45)" text-anchor="end" font-size="16" fill="#4a4b5e">21 May</text>
<text transform="translate(1464.24 647.50) rotate(-45)" text-anchor="end" font-size="16" fill="#4a4b5e">23 May</text>
<text transform="translate(1513.07 647.50) rotate(-45)" text-anchor="end" font-size="16" fill="#4a4b5e">25 May</text>
<text transform="translate(1561.91 647.50) rotate(-45)" text-anchor="end" font-size="16" fill="#4a4b5e">27 May</text>
<text transform="translate(1610.75 647.50) rotate(-45)" text-anchor="end" font-size="16" fill="#4a4b5e">29 May</text>
<text transform="translate(1659.59 647.50) rotate(-45)" text-anchor="end" font-size="16" fill="#4a4b5e">31 May</text>
<path d="M875.4 712 H896.2" stroke="#1de36b" stroke-width="4" stroke-dasharray="5.6 3.3"/>
<text x="903" y="716.7" font-size="16" fill="#4a4b5e">Forecast</text>
<path d="M979 712 H999.5" stroke="#0a6fd0" stroke-width="4"/>
<text x="1007" y="716.7" font-size="16" fill="#4a4b5e">1 Year Actual (Total)</text>
<path d="M1161 712 H1181.8" stroke="#ff3dd1" stroke-width="4" stroke-dasharray="5.6 3.3"/>
<text x="1188.5" y="716.7" font-size="16" fill="#4a4b5e">Same Point In Time 1 Year</text>
<rect x="1391.5" y="704" width="20.2" height="15.7" fill="#33bbf7"/>
<text x="1419" y="716.7" font-size="16" fill="#4a4b5e">Rooms</text>
<rect x="1483.7" y="704" width="20.3" height="15.7" fill="#52d9bf"/>
<text x="1511.5" y="716.7" font-size="16" fill="#4a4b5e">F&amp;B</text>
<rect x="1555.7" y="704" width="20.3" height="15.7" fill="#9589e6"/>
<text x="1583" y="716.7" font-size="16" fill="#4a4b5e">Function</text>
<rect x="1143" y="733.4" width="21.0" height="16.2" fill="#ffb64b"/>
<text x="1170.6" y="745.8" font-size="16" fill="#4a4b5e">Other</text>
<rect x="1224.8" y="733.4" width="20.8" height="16.2" fill="#f8f4a0"/>
<text x="1252.5" y="745.8" font-size="16" fill="#4a4b5e">Provisional (Total)</text>
</svg>
<div class="t" style="left:70.06px;top:1080.49px;font-size:20.8px;color:#3c3d50;transform:scaleX(1.1200);transform-origin:0 0;letter-spacing:0.393px;-webkit-text-stroke:0.4px #3c3d50;">Market Segmentation</div>
<div style="position:absolute;left:532.3px;top:1069.5px;width:107.7px;height:42.7px;border-radius:8px;background:#f3f4f7;overflow:hidden;box-shadow:0 0 0 1px #eceef2 inset"><div style="position:absolute;left:54.5px;top:0;width:54px;height:43px;background:#e2e5ec"></div></div>
<svg style="left:549.8px;top:1083.2px" width="18" height="18" viewBox="0 0 18 18"><g fill="none" stroke="#697386" stroke-width="1.9"><rect x="0.95" y="0.95" width="16.1" height="16.1"/><path d="M6.00 0 V18"/><path d="M0 6.00 H18"/><path d="M12.00 0 V18"/><path d="M0 12.00 H18"/></g></svg>
<svg style="left:601.5px;top:1081.5px" width="22.0" height="21.0" viewBox="0 0 22 21"><g fill="none" stroke="#697386" stroke-width="1.7"><rect x="1.2" y="6.2" width="4.8" height="13.9"/><rect x="8.6" y="10.9" width="4.6" height="9.2"/><rect x="16" y="1.2" width="4.9" height="18.9"/></g></svg>
<div style="position:absolute;left:652px;top:1069.9px;width:181.6px;height:41.7px;box-sizing:border-box;border:1.5px solid #5b6ef5;border-radius:10px;box-shadow:0 3px 8px rgba(0,0,0,0.05)"></div>
<div class="t" style="left:669.30px;top:1083.31px;font-size:15.1px;color:#35425a;transform:scaleX(1.1000);transform-origin:0 0;-webkit-text-stroke:0.3px #35425a;">Rooms Revenue</div>
<svg style="left:805.4px;top:1089.4px" width="10.2" height="5.5" viewBox="0 0 10.2 5.5"><path d="M0 0 L10.2 0 L5.1 5.5 Z" fill="#697386"/></svg>
<div class="t" style="left:912.76px;top:1080.09px;font-size:20.8px;color:#3c3d50;transform:scaleX(1.1200);transform-origin:0 0;letter-spacing:0.031px;-webkit-text-stroke:0.4px #3c3d50;">Booking Curve</div>
<div style="position:absolute;left:1564.3px;top:1070.1px;width:112.6px;height:41.5px;box-sizing:border-box;border:1.5px solid #5b6ef5;border-radius:10px;box-shadow:0 3px 8px rgba(0,0,0,0.05)"></div>
<div class="t" style="left:1582.49px;top:1083.11px;font-size:15.1px;color:#35425a;transform:scaleX(1.1065);transform-origin:0 0;-webkit-text-stroke:0.3px #35425a;">Rooms</div>
<svg style="left:1648.3px;top:1089.6px" width="9.9" height="5.5" viewBox="0 0 9.9 5.5"><path d="M0 0 L9.9 0 L4.95 5.5 Z" fill="#697386"/></svg>
<div style="position:absolute;left:45px;top:1128.4px;width:816px;height:420px;background:#fff;border-radius:16px;"></div>
<div style="position:absolute;left:887px;top:1128.4px;width:816px;height:420px;background:#fff;border-radius:16px;"></div>
<svg style="left:45px;top:1128px" width="816" height="378" viewBox="45 1128 816 378" font-family="Liberation Sans, sans-serif">
<path d="M137.3 1332.90 H822.8" stroke="#d6d6d6" stroke-width="1" stroke-dasharray="4 5.35"/>
<text x="129.4" y="1338.20" text-anchor="end" font-size="16.3" fill="#4a4b5e">0</text>
<path d="M137.3 1305.88 H822.8" stroke="#d6d6d6" stroke-width="1" stroke-dasharray="4 5.35"/>
<text x="129.4" y="1311.18" text-anchor="end" font-size="16.3" fill="#4a4b5e">5000</text>
<path d="M137.3 1278.86 H822.8" stroke="#d6d6d6" stroke-width="1" stroke-dasharray="4 5.35"/>
<text x="129.4" y="1284.16" text-anchor="end" font-size="16.3" fill="#4a4b5e">10000</text>
<path d="M137.3 1251.84 H822.8" stroke="#d6d6d6" stroke-width="1" stroke-dasharray="4 5.35"/>
<text x="129.4" y="1257.14" text-anchor="end" font-size="16.3" fill="#4a4b5e">15000</text>
<path d="M137.3 1224.82 H822.8" stroke="#d6d6d6" stroke-width="1" stroke-dasharray="4 5.35"/>
<text x="129.4" y="1230.12" text-anchor="end" font-size="16.3" fill="#4a4b5e">20000</text>
<path d="M137.3 1197.80 H822.8" stroke="#d6d6d6" stroke-width="1" stroke-dasharray="4 5.35"/>
<text x="129.4" y="1203.10" text-anchor="end" font-size="16.3" fill="#4a4b5e">25000</text>
<path d="M137.3 1170.78 H822.8" stroke="#d6d6d6" stroke-width="1" stroke-dasharray="4 5.35"/>
<text x="129.4" y="1176.08" text-anchor="end" font-size="16.3" fill="#4a4b5e">30000</text>
<rect x="143.80" y="1223.10" width="32.7" height="109.80" fill="#33bbf7"/>
<rect x="189.50" y="1266.70" width="32.7" height="66.20" fill="#33bbf7"/>
<rect x="235.20" y="1285.25" width="32.7" height="47.65" fill="#33bbf7"/>
<rect x="280.90" y="1311.80" width="32.7" height="21.10" fill="#33bbf7"/>
<rect x="326.60" y="1319.69" width="32.7" height="13.21" fill="#33bbf7"/>
<rect x="372.30" y="1326.90" width="32.7" height="6.00" fill="#33bbf7"/>
<rect x="418.00" y="1317.97" width="32.7" height="14.93" fill="#33bbf7"/>
<rect x="463.70" y="1319.17" width="32.7" height="13.73" fill="#33bbf7"/>
<rect x="509.40" y="1326.55" width="32.7" height="6.35" fill="#33bbf7"/>
<rect x="555.10" y="1329.72" width="32.7" height="3.18" fill="#33bbf7"/>
<path d="M137.3 1188.10 H183.00 V1276.40 H228.70 V1293.99 H274.40 V1301.68 H320.10 V1306.31 H365.80 V1309.40 H411.50 V1331.70 H457.20 V1330.67 H502.90 V1332.04 H548.60 V1326.54 H594.30 V1331.49 H640.00 V1332.02 H685.70 V1332.37 H731.40 V1332.72 H777.10 V1332.90 H822.8" fill="none" stroke="#ff3dd1" stroke-width="3.2" stroke-dasharray="6.5 4"/>
<path d="M137.3 1176.50 H183.00 V1276.40 H228.70 V1292.99 H274.40 V1304.25 H320.10 V1304.25 H365.80 V1309.40 H411.50 V1331.70 H457.20 V1330.67 H502.90 V1332.04 H548.60 V1326.54 H594.30 V1331.49 H640.00 V1332.02 H685.70 V1332.37 H731.40 V1332.72 H777.10 V1332.90 H822.8" fill="none" stroke="#0a6fd0" stroke-width="3.2"/>
<path d="M137.3 1221.90 H183.00 V1265.40 H228.70 V1284.04 H274.40 V1311.11 H320.10 V1319.17 H365.80 V1326.04 H411.50 V1317.97 H457.20 V1316.95 H502.90 V1325.52 H548.60 V1328.84 H594.30 V1329.37 H640.00 V1330.07 H685.70 V1330.60 H731.40 V1332.37 H777.10 V1332.90 H822.8" fill="none" stroke="#1de36b" stroke-width="3.2" stroke-dasharray="6.5 4"/>
<text transform="translate(162.95 1343.30) rotate(-40)" text-anchor="end" font-size="15.9" fill="#4a4b5e">OTA_RACK</text>
<text transform="translate(208.65 1343.30) rotate(-40)" text-anchor="end" font-size="15.9" fill="#4a4b5e">OTA_DISCOUNT</text>
<text transform="translate(254.35 1343.30) rotate(-40)" text-anchor="end" font-size="15.9" fill="#4a4b5e">RACK</text>
<text transform="translate(300.05 1343.30) rotate(-40)" text-anchor="end" font-size="15.9" fill="#4a4b5e">ADVPURCHASE</text>
<text transform="translate(345.75 1343.30) rotate(-40)" text-anchor="end" font-size="15.9" fill="#4a4b5e">DISCOUNT</text>
<text transform="translate(391.45 1343.30) rotate(-40)" text-anchor="end" font-size="15.9" fill="#4a4b5e">FIT</text>
<text transform="translate(437.15 1343.30) rotate(-40)" text-anchor="end" font-size="15.9" fill="#4a4b5e">LNR</text>
<text transform="translate(482.85 1343.30) rotate(-40)" text-anchor="end" font-size="15.9" fill="#4a4b5e">KNR</text>
<text transform="translate(528.55 1343.30) rotate(-40)" text-anchor="end" font-size="15.9" fill="#4a4b5e">(None)</text>
<text transform="translate(574.25 1343.30) rotate(-40)" text-anchor="end" font-size="15.9" fill="#4a4b5e">BAR</text>
<text transform="translate(619.95 1343.30) rotate(-40)" text-anchor="end" font-size="15.9" fill="#4a4b5e">PRIVATE</text>
<text transform="translate(665.65 1343.30) rotate(-40)" text-anchor="end" font-size="15.9" fill="#4a4b5e">WEDDING</text>
<text transform="translate(711.35 1343.30) rotate(-40)" text-anchor="end" font-size="15.9" fill="#4a4b5e">OTA</text>
<text transform="translate(757.05 1343.30) rotate(-40)" text-anchor="end" font-size="15.9" fill="#4a4b5e">OTHER</text>
<text transform="translate(802.75 1343.30) rotate(-40)" text-anchor="end" font-size="15.9" fill="#4a4b5e">COMP</text>
<path d="M130 1445 H150" stroke="#1de36b" stroke-width="4" stroke-dasharray="5.6 3.3"/>
<text x="157.5" y="1449.8" font-size="16" fill="#4a4b5e">Forecast</text>
<path d="M233.8 1445 H253.7" stroke="#0a6fd0" stroke-width="4"/>
<text x="261.5" y="1449.8" font-size="16" fill="#4a4b5e">1 Year Actual (Total)</text>
<path d="M415.3 1445 H435.5" stroke="#ff3dd1" stroke-width="4" stroke-dasharray="5.6 3.3"/>
<text x="442.5" y="1449.8" font-size="16" fill="#4a4b5e">Same Point In Time 1 Year</text>
<rect x="644.8" y="1436.5" width="20.2" height="16.0" fill="#33bbf7"/>
<text x="672.5" y="1449.8" font-size="16" fill="#4a4b5e">On The Books</text>
<rect x="399.5" y="1465.6" width="20.2" height="15.8" fill="#f8f4a0"/>
<text x="427.5" y="1479.2" font-size="16" fill="#4a4b5e">Provisional</text>
</svg>
<svg style="left:887px;top:1128px" width="816" height="378" viewBox="887 1128 816 378" font-family="Liberation Sans, sans-serif">
<path d="M971.6 1432.60 H1658.6" stroke="#d6d6d6" stroke-width="1" stroke-dasharray="4 5.35"/>
<text x="957.6" y="1438.30" text-anchor="end" font-size="16.3" fill="#4a4b5e">100</text>
<path d="M971.6 1406.50 H1658.6" stroke="#d6d6d6" stroke-width="1" stroke-dasharray="4 5.35"/>
<text x="957.6" y="1412.20" text-anchor="end" font-size="16.3" fill="#4a4b5e">150</text>
<path d="M971.6 1380.40 H1658.6" stroke="#d6d6d6" stroke-width="1" stroke-dasharray="4 5.35"/>
<text x="957.6" y="1386.10" text-anchor="end" font-size="16.3" fill="#4a4b5e">200</text>
<path d="M971.6 1354.30 H1658.6" stroke="#d6d6d6" stroke-width="1" stroke-dasharray="4 5.35"/>
<text x="957.6" y="1360.00" text-anchor="end" font-size="16.3" fill="#4a4b5e">250</text>
<path d="M971.6 1328.20 H1658.6" stroke="#d6d6d6" stroke-width="1" stroke-dasharray="4 5.35"/>
<text x="957.6" y="1333.90" text-anchor="end" font-size="16.3" fill="#4a4b5e">300</text>
<path d="M971.6 1302.10 H1658.6" stroke="#d6d6d6" stroke-width="1" stroke-dasharray="4 5.35"/>
<text x="957.6" y="1307.80" text-anchor="end" font-size="16.3" fill="#4a4b5e">350</text>
<path d="M971.6 1276.00 H1658.6" stroke="#d6d6d6" stroke-width="1" stroke-dasharray="4 5.35"/>
<text x="957.6" y="1281.70" text-anchor="end" font-size="16.3" fill="#4a4b5e">400</text>
<path d="M971.6 1249.90 H1658.6" stroke="#d6d6d6" stroke-width="1" stroke-dasharray="4 5.35"/>
<text x="957.6" y="1255.60" text-anchor="end" font-size="16.3" fill="#4a4b5e">450</text>
<path d="M971.6 1223.80 H1658.6" stroke="#d6d6d6" stroke-width="1" stroke-dasharray="4 5.35"/>
<text x="957.6" y="1229.50" text-anchor="end" font-size="16.3" fill="#4a4b5e">500</text>
<path d="M971.6 1197.70 H1658.6" stroke="#d6d6d6" stroke-width="1" stroke-dasharray="4 5.35"/>
<text x="957.6" y="1203.40" text-anchor="end" font-size="16.3" fill="#4a4b5e">550</text>
<path d="M971.6 1171.60 H1658.6" stroke="#d6d6d6" stroke-width="1" stroke-dasharray="4 5.35"/>
<text x="957.6" y="1177.30" text-anchor="end" font-size="16.3" fill="#4a4b5e">600</text>
<path d="M971.69 1412.17 C974.45 1411.83 982.17 1410.74 987.48 1410.23 C992.80 1409.72 998.24 1409.77 1002.07 1409.26 C1005.89 1408.75 1006.80 1407.44 1009.36 1407.31 C1011.91 1407.19 1013.24 1408.53 1016.65 1408.53 C1020.05 1408.53 1025.39 1407.31 1028.80 1407.31 C1032.20 1407.31 1033.11 1408.74 1036.09 1408.53 C1039.06 1408.32 1041.56 1406.74 1045.81 1406.10 C1050.06 1405.46 1056.14 1404.76 1060.39 1404.88 C1064.64 1405.01 1066.71 1406.62 1070.11 1406.83 C1073.51 1407.04 1076.43 1406.65 1079.83 1406.10 C1083.23 1405.55 1085.72 1403.88 1089.55 1403.67 C1093.38 1403.46 1096.60 1404.76 1101.70 1404.88 C1106.80 1405.01 1114.46 1404.82 1118.71 1404.40 C1122.96 1403.97 1122.17 1402.88 1126.00 1402.45 C1129.83 1402.03 1135.91 1402.48 1140.58 1401.97 C1145.26 1401.46 1148.91 1400.39 1152.73 1399.54 C1156.56 1398.69 1159.48 1397.45 1162.45 1397.11 C1165.43 1396.77 1167.19 1398.15 1169.74 1397.59 C1172.30 1397.04 1174.48 1394.59 1177.04 1393.95 C1179.59 1393.31 1181.77 1394.80 1184.33 1393.95 C1186.88 1393.10 1188.21 1390.15 1191.62 1389.09 C1195.02 1388.03 1199.94 1388.30 1203.77 1387.87 C1207.59 1387.45 1209.66 1388.15 1213.49 1386.66 C1217.31 1385.17 1221.81 1381.37 1225.64 1379.37 C1229.47 1377.37 1232.38 1376.30 1235.36 1375.24 C1238.34 1374.17 1240.10 1373.21 1242.65 1373.29 C1245.20 1373.38 1247.39 1376.57 1249.94 1375.72 C1252.49 1374.87 1254.25 1370.90 1257.23 1368.43 C1260.21 1365.97 1263.12 1363.75 1266.95 1361.63 C1270.78 1359.50 1275.70 1357.64 1279.10 1356.28 C1282.50 1354.92 1283.84 1355.55 1286.39 1353.85 C1288.94 1352.15 1291.30 1348.48 1293.68 1346.56 C1296.06 1344.65 1298.91 1343.56 1300.00 1342.92 C1301.09 1342.27 1297.32 1343.53 1299.90 1342.87 C1302.48 1342.21 1309.54 1341.32 1314.74 1339.16 C1319.94 1336.99 1325.25 1332.10 1329.58 1330.50 C1333.91 1328.90 1336.02 1330.35 1339.48 1330.00 C1342.94 1329.66 1345.91 1328.95 1349.38 1328.52 C1352.84 1328.09 1355.81 1328.92 1359.27 1327.53 C1362.74 1326.15 1364.84 1322.47 1369.17 1320.60 C1373.50 1318.74 1379.68 1318.19 1384.01 1316.89 C1388.34 1315.59 1390.45 1314.26 1393.91 1313.18 C1397.37 1312.10 1399.91 1311.14 1403.81 1310.71 C1407.70 1310.27 1412.28 1312.87 1416.18 1310.71 C1420.07 1308.54 1422.61 1301.45 1426.07 1298.34 C1429.53 1295.22 1432.07 1293.33 1435.97 1292.89 C1439.86 1292.46 1443.57 1296.43 1448.34 1295.86 C1453.10 1295.30 1457.12 1290.98 1463.18 1289.68 C1469.24 1288.38 1476.91 1289.31 1482.97 1288.44 C1489.04 1287.58 1493.49 1286.03 1497.82 1284.73 C1502.15 1283.43 1503.82 1282.53 1507.71 1281.02 C1511.61 1279.50 1515.32 1278.24 1520.08 1276.07 C1524.85 1273.91 1529.30 1271.25 1534.93 1268.65 C1540.56 1266.05 1546.62 1263.74 1552.25 1261.23 C1557.87 1258.72 1561.90 1256.68 1567.09 1254.30 C1572.29 1251.92 1577.17 1250.09 1581.93 1247.62 C1586.70 1245.15 1589.11 1242.15 1594.30 1240.20 C1599.50 1238.25 1606.86 1238.65 1611.62 1236.49 C1616.39 1234.32 1618.06 1230.43 1621.52 1227.83 C1624.98 1225.23 1627.95 1222.94 1631.42 1221.64 C1634.88 1220.34 1636.55 1220.93 1641.31 1220.41 C1646.07 1219.89 1655.60 1218.98 1658.63 1218.67" fill="none" stroke="#ff3ecf" stroke-width="3.5" stroke-linejoin="round" stroke-linecap="round"/>
<path d="M971.69 1401.24 C973.18 1401.24 977.43 1401.66 980.19 1401.24 C982.96 1400.81 983.66 1399.23 987.48 1398.81 C991.31 1398.38 998.24 1398.94 1002.07 1398.81 C1005.89 1398.68 1006.80 1398.63 1009.36 1398.08 C1011.91 1397.53 1014.09 1395.95 1016.65 1395.65 C1019.20 1395.35 1021.39 1395.83 1023.94 1396.38 C1026.49 1396.93 1027.40 1398.38 1031.23 1398.81 C1035.05 1399.23 1041.98 1398.81 1045.81 1398.81 C1049.64 1398.81 1050.55 1399.36 1053.10 1398.81 C1055.65 1398.26 1056.56 1396.63 1060.39 1395.65 C1064.22 1394.67 1070.29 1394.24 1074.97 1393.22 C1079.65 1392.20 1081.59 1390.41 1087.12 1389.82 C1092.65 1389.22 1101.03 1390.16 1106.56 1389.82 C1112.09 1389.48 1115.31 1388.21 1118.71 1387.87 C1122.11 1387.53 1121.75 1388.51 1126.00 1387.87 C1130.26 1387.24 1137.06 1384.99 1143.01 1384.23 C1148.97 1383.46 1154.50 1383.50 1160.02 1383.50 C1165.55 1383.50 1169.08 1384.31 1174.61 1384.23 C1180.13 1384.14 1186.51 1383.52 1191.62 1383.01 C1196.72 1382.50 1199.51 1381.65 1203.77 1381.31 C1208.02 1380.97 1211.66 1381.71 1215.92 1381.07 C1220.17 1380.43 1223.39 1378.69 1228.07 1377.67 C1232.75 1376.65 1238.40 1374.94 1242.65 1375.24 C1246.90 1375.53 1248.97 1378.77 1252.37 1379.37 C1255.77 1379.96 1258.69 1379.49 1262.09 1378.64 C1265.49 1377.79 1268.62 1375.44 1271.81 1374.51 C1275.00 1373.57 1277.76 1374.78 1280.32 1373.29 C1282.87 1371.80 1283.20 1367.28 1286.39 1366.00 C1289.58 1364.73 1295.31 1366.07 1298.54 1366.00 C1301.77 1365.94 1302.01 1366.22 1304.84 1365.63 C1307.68 1365.05 1310.84 1363.83 1314.74 1362.66 C1318.64 1361.49 1323.21 1360.60 1327.11 1358.95 C1331.01 1357.31 1333.54 1354.13 1337.01 1353.26 C1340.47 1352.39 1342.14 1354.31 1346.90 1354.00 C1351.67 1353.70 1359.46 1352.61 1364.22 1351.53 C1368.98 1350.45 1370.22 1348.68 1374.12 1347.82 C1378.01 1346.95 1381.72 1348.40 1386.49 1346.58 C1391.25 1344.76 1397.00 1339.59 1401.33 1337.43 C1405.66 1335.26 1407.33 1336.20 1411.23 1334.21 C1415.12 1332.22 1419.70 1327.65 1423.60 1326.05 C1427.49 1324.44 1430.46 1326.36 1433.49 1325.06 C1436.52 1323.76 1437.88 1321.57 1440.92 1318.62 C1443.95 1315.68 1446.91 1310.40 1450.81 1308.23 C1454.71 1306.07 1459.93 1307.12 1463.18 1306.25 C1466.43 1305.39 1467.63 1309.87 1469.37 1303.29 C1471.10 1296.70 1471.78 1277.74 1473.08 1268.65 C1474.38 1259.56 1474.62 1255.66 1476.79 1251.33 C1478.95 1247.00 1482.63 1246.29 1485.45 1243.91 C1488.26 1241.53 1490.27 1239.46 1492.87 1237.72 C1495.47 1235.99 1497.91 1235.61 1500.29 1234.01 C1502.67 1232.41 1504.31 1229.65 1506.48 1228.57 C1508.64 1227.49 1510.28 1229.47 1512.66 1227.83 C1515.04 1226.18 1516.19 1222.85 1520.08 1219.17 C1523.98 1215.49 1529.73 1210.05 1534.93 1206.80 C1540.12 1203.55 1545.01 1202.26 1549.77 1200.61 C1554.53 1198.97 1557.38 1198.48 1562.14 1197.40 C1566.90 1196.31 1572.66 1195.16 1576.99 1194.43 C1581.32 1193.69 1583.85 1194.06 1586.88 1193.19 C1589.91 1192.33 1591.71 1191.21 1594.30 1189.48 C1596.90 1187.75 1598.70 1184.90 1601.73 1183.30 C1604.76 1181.69 1608.16 1181.06 1611.62 1180.33 C1615.09 1179.59 1618.27 1179.57 1621.52 1179.09 C1624.77 1178.61 1628.66 1177.86 1630.18 1177.61" fill="none" stroke="#36bcf5" stroke-width="3.5" stroke-linejoin="round" stroke-linecap="round"/>
<path d="M1630.18 1177.85 H1658.6" fill="none" stroke="#1de36b" stroke-width="3.5" stroke-dasharray="6.5 5"/>
<text transform="translate(975.90 1443.10) rotate(-45)" text-anchor="end" font-size="16.3" fill="#4a4b5e">94</text>
<text transform="translate(1005.13 1443.10) rotate(-45)" text-anchor="end" font-size="16.3" fill="#4a4b5e">90</text>
<text transform="translate(1034.37 1443.10) rotate(-45)" text-anchor="end" font-size="16.3" fill="#4a4b5e">86</text>
<text transform="translate(1063.60 1443.10) rotate(-45)" text-anchor="end" font-size="16.3" fill="#4a4b5e">82</text>
<text transform="translate(1092.84 1443.10) rotate(-45)" text-anchor="end" font-size="16.3" fill="#4a4b5e">78</text>
<text transform="translate(1122.07 1443.10) rotate(-45)" text-anchor="end" font-size="16.3" fill="#4a4b5e">74</text>
<text transform="translate(1151.30 1443.10) rotate(-45)" text-anchor="end" font-size="16.3" fill="#4a4b5e">70</text>
<text transform="translate(1180.54 1443.10) rotate(-45)" text-anchor="end" font-size="16.3" fill="#4a4b5e">66</text>
<text transform="translate(1209.77 1443.10) rotate(-45)" text-anchor="end" font-size="16.3" fill="#4a4b5e">62</text>
<text transform="translate(1239.01 1443.10) rotate(-45)" text-anchor="end" font-size="16.3" fill="#4a4b5e">58</text>
<text transform="translate(1268.24 1443.10) rotate(-45)" text-anchor="end" font-size="16.3" fill="#4a4b5e">54</text>
<text transform="translate(1297.47 1443.10) rotate(-45)" text-anchor="end" font-size="16.3" fill="#4a4b5e">50</text>
<text transform="translate(1326.71 1443.10) rotate(-45)" text-anchor="end" font-size="16.3" fill="#4a4b5e">46</text>
<text transform="translate(1355.94 1443.10) rotate(-45)" text-anchor="end" font-size="16.3" fill="#4a4b5e">42</text>
<text transform="translate(1385.18 1443.10) rotate(-45)" text-anchor="end" font-size="16.3" fill="#4a4b5e">38</text>
<text transform="translate(1414.41 1443.10) rotate(-45)" text-anchor="end" font-size="16.3" fill="#4a4b5e">34</text>
<text transform="translate(1443.64 1443.10) rotate(-45)" text-anchor="end" font-size="16.3" fill="#4a4b5e">30</text>
<text transform="translate(1472.88 1443.10) rotate(-45)" text-anchor="end" font-size="16.3" fill="#4a4b5e">26</text>
<text transform="translate(1502.11 1443.10) rotate(-45)" text-anchor="end" font-size="16.3" fill="#4a4b5e">22</text>
<text transform="translate(1531.35 1443.10) rotate(-45)" text-anchor="end" font-size="16.3" fill="#4a4b5e">18</text>
<text transform="translate(1560.58 1443.10) rotate(-45)" text-anchor="end" font-size="16.3" fill="#4a4b5e">14</text>
<text transform="translate(1589.81 1443.10) rotate(-45)" text-anchor="end" font-size="16.3" fill="#4a4b5e">10</text>
<text transform="translate(1619.05 1443.10) rotate(-45)" text-anchor="end" font-size="16.3" fill="#4a4b5e">6</text>
<text transform="translate(1648.28 1443.10) rotate(-45)" text-anchor="end" font-size="16.3" fill="#4a4b5e">2</text>
<path d="M1150.3 1473.6 H1169.7" stroke="#36bcf5" stroke-width="4"/>
<text x="1177.5" y="1479.5" font-size="16" fill="#4a4b5e">This Year</text>
<path d="M1249.8 1473.6 H1270.7" stroke="#1de36b" stroke-width="4" stroke-dasharray="5.6 6"/>
<text x="1277.3" y="1479.5" font-size="16" fill="#4a4b5e">Forecast</text>
<path d="M1347 1473.6 H1367.3" stroke="#ff3ecf" stroke-width="4"/>
<text x="1374.6" y="1479.5" font-size="16" fill="#4a4b5e">Last Year</text>
</svg>
<svg style="left:0;top:1490px" width="6" height="10" viewBox="0 0 6 10"><path d="M0 2.8 L2.6 6.2 L0 6.8 Z" fill="#111" stroke="#fff" stroke-width="0.6"/></svg>
</body></html>
